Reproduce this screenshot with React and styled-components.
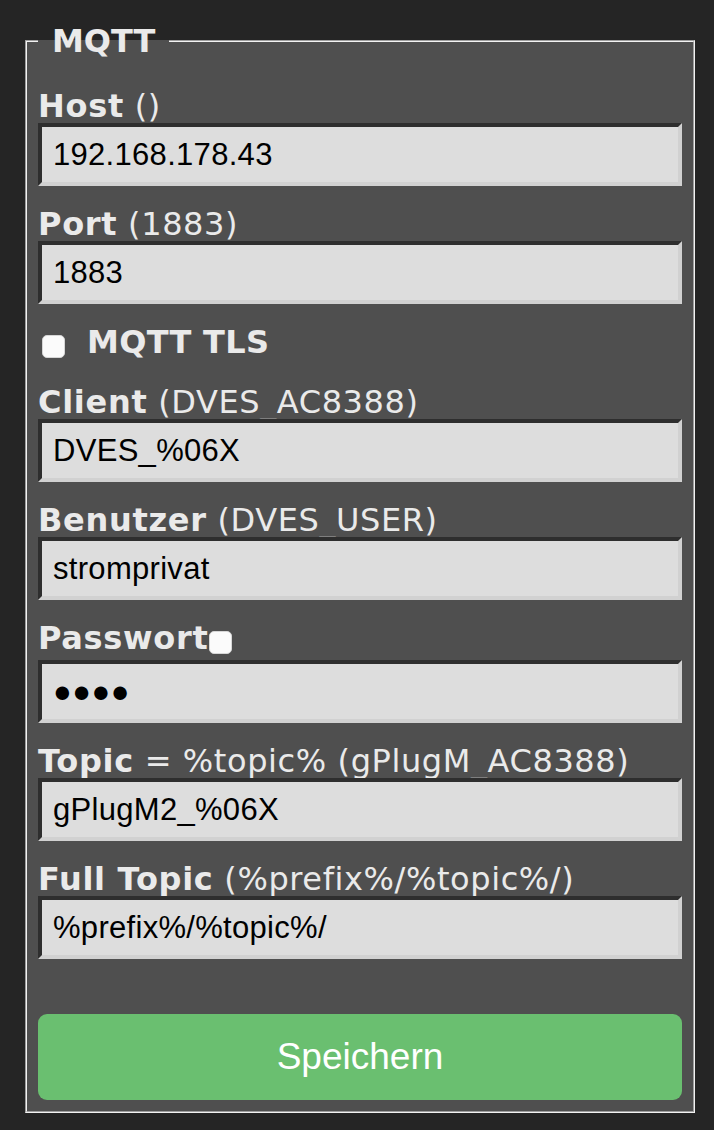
import React from "react";
import styled, { createGlobalStyle } from "styled-components";

const GlobalStyle = createGlobalStyle`
  html, body {
    margin: 0;
    background: #252525;
  }
  body {
    font-family: "DejaVu Sans", Verdana, sans-serif;
    color: #eaeaea;
  }
`;

const Page = styled.div`
  padding: 24px 19px 16px 25px;
`;

const Fieldset = styled.fieldset`
  margin: 0;
  padding: 31px 11px 11px 11px;
  min-width: 0;
  background: #4f4f4f;
  border: 2px groove #f2f2f2;
`;

const Legend = styled.legend`
  padding: 0 14px;
  font-size: 32px;
  line-height: 34px;
  font-weight: bold;
  color: #eaeaea;
`;

const Form = styled.form`
  display: flex;
  flex-direction: column;
`;

const Field = styled.div`
  display: flex;
  flex-direction: column;
  margin-top: ${(p) => (p.$first ? 0 : 21)}px;
`;

const Label = styled.label`
  display: block;
  font-size: 32px;
  line-height: 34px;
  letter-spacing: 0.6px;
  margin-bottom: ${(p) => p.$extra || 0}px;
  white-space: nowrap;
  b {
    font-weight: bold;
    letter-spacing: 0.7px;
  }
`;

const Input = styled.input`
  box-sizing: border-box;
  width: 100%;
  height: 63px;
  margin: 0;
  padding: 0 11px;
  border: 4px solid;
  border-color: #2e2e2e #d1d1d1 #d1d1d1 #2e2e2e;
  background: #dddddd;
  color: #000;
  font-family: "Liberation Sans", Arial, sans-serif;
  font-size: 31px;
  letter-spacing: ${(p) => (p.$dots ? "0.5px" : "0.3px")};
  outline: none;
`;

const Check = styled.input.attrs({ type: "checkbox" })`
  appearance: none;
  -webkit-appearance: none;
  box-sizing: border-box;
  width: 23px;
  height: 23px;
  margin: ${(p) => p.$margin || "0"};
  background: #fbfbfb;
  border: 1px solid #d6d6d6;
  border-radius: 5px;
  vertical-align: ${(p) => p.$valign || "baseline"};
  flex: none;
`;

const CheckRow = styled.div`
  display: flex;
  align-items: flex-start;
  height: 39px;
  margin-top: 21px;
  padding-left: 4px;
  font-size: 32px;
  line-height: 34px;
  font-weight: bold;
  letter-spacing: 0.3px;
`;

const CheckText = styled.span`
  margin-left: 22px;
`;

const Button = styled.button`
  margin-top: 55px;
  height: 86px;
  width: 100%;
  border: 0;
  border-radius: 9px;
  background: #6abf70;
  color: #fff;
  font-family: "Liberation Sans", Arial, sans-serif;
  font-size: 37px;
  cursor: pointer;
`;

const fields = [
  { key: "host", name: "Host", hint: " ()", value: "192.168.178.43" },
  { key: "port", name: "Port", hint: " (1883)", value: "1883" },
  { key: "tls" },
  { key: "client", name: "Client", hint: " (DVES_AC8388)", value: "DVES_%06X" },
  { key: "user", name: "Benutzer", hint: " (DVES_USER)", value: "stromprivat" },
  { key: "pass", name: "Passwort", value: "●●●●", secret: true },
  { key: "topic", name: "Topic", hint: " = %topic% (gPlugM_AC8388)", value: "gPlugM2_%06X" },
  { key: "full", name: "Full Topic", hint: " (%prefix%/%topic%/)", value: "%prefix%/%topic%/" },
];

export default function App() {
  return (
    <Page>
      <GlobalStyle />
      <Fieldset>
        <Legend>MQTT</Legend>
        <Form onSubmit={(e) => e.preventDefault()}>
          {fields.map((f, i) =>
            f.key === "tls" ? (
              <CheckRow key={f.key}>
                <Check $margin="10px 0 0 0" />
                <CheckText>MQTT TLS</CheckText>
              </CheckRow>
            ) : (
              <Field key={f.key} $first={i === 0}>
                <Label $extra={f.secret ? 5 : 0}>
                  <b>{f.name}</b>
                  {f.hint}
                  {f.secret && <Check $valign="-5px" />}
                </Label>
                <Input defaultValue={f.value} $dots={f.secret} />
              </Field>
            )
          )}
          <Button type="submit">Speichern</Button>
        </Form>
      </Fieldset>
    </Page>
  );
}
